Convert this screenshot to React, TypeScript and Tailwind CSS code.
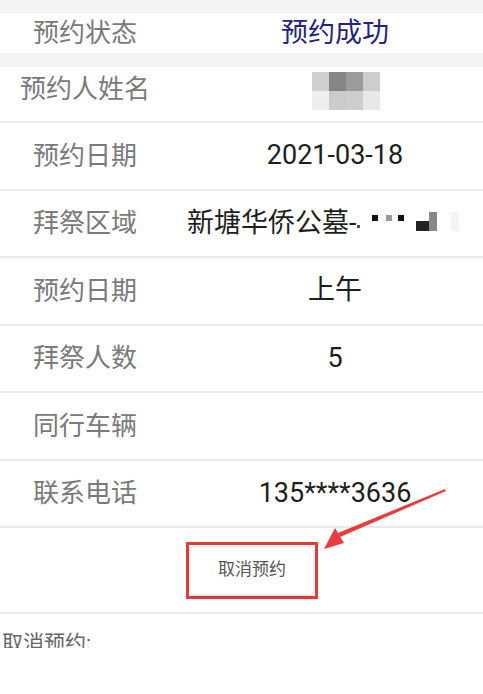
import React from 'react'

const font = { fontFamily: '"Roboto", "Noto Sans CJK SC", sans-serif' }

const rows: { label: string; value: React.ReactNode }[] = [
  { label: '预约日期', value: '2021-03-18' },
  {
    label: '拜祭区域',
    value: (
      <span className="inline-flex items-center">
        新塘华侨公墓-
        <span className="relative inline-block w-[150px] h-[26px]">
          <span className="absolute left-[1px] top-[15px] w-[3px] h-[3px] bg-[#555]" />
          <span className="absolute left-[16px] top-[5px] w-[6px] h-[6px] bg-[#111]" />
          <span className="absolute left-[30px] top-[5px] w-[6px] h-[6px] bg-[#999]" />
          <span className="absolute left-[42px] top-[5px] w-[6px] h-[6px] bg-[#111]" />
          <span className="absolute left-[60px] top-[11px] w-[18px] h-[10px] bg-[#222]" />
          <span className="absolute left-[73px] top-[2px] w-[8px] h-[19px] bg-[#888]" />
          <span className="absolute left-[95px] top-[2px] w-[8px] h-[19px] bg-[#f4f4f4]" />
        </span>
      </span>
    ),
  },
  { label: '预约日期', value: '上午' },
  { label: '拜祭人数', value: '5' },
  { label: '同行车辆', value: '' },
  { label: '联系电话', value: '135****3636' },
]

const App = () => {
  return (
    <div style={font} className="relative w-[483px] h-[694px] bg-white overflow-hidden">
      <div className="h-[13px] bg-[#f3f3f3]" />
      <div className="flex h-[40px] items-center bg-white">
        <div className="w-[170px] text-center text-[26px] text-[#7a7a7a] leading-none">预约状态</div>
        <div className="ml-[17px] w-[296px] text-center text-[27px] text-[#25237f] leading-none">预约成功</div>
      </div>
      <div className="h-[14px] bg-[#f3f3f3]" />
      <div className="flex h-[56px] items-start pt-[9px] border-b-2 border-[#e9e9e9]">
        <div className="w-[170px] text-center text-[26px] text-[#7a7a7a] leading-none">预约人姓名</div>
        <div className="ml-[17px] w-[296px] flex justify-center -mt-[4px]">
          <div className="grid grid-cols-4 w-[68px] h-[38px] ml-[22px]">
            <div className="bg-[#cfcfcf]" />
            <div className="bg-[#858585]" />
            <div className="bg-[#9c9c9c]" />
            <div className="bg-[#cdcdcd]" />
            <div className="bg-[#eeeeee]" />
            <div className="bg-[#cbcbcb]" />
            <div className="bg-[#cdcdcd]" />
            <div className="bg-[#e8e8e8]" />
          </div>
        </div>
      </div>
      {rows.map((r, i) => (
        <div key={i} className="flex h-[67.5px] items-center border-b-2 border-[#e9e9e9] overflow-hidden">
          <div className="w-[170px] shrink-0 text-center text-[26px] text-[#7a7a7a] leading-none">{r.label}</div>
          <div className="ml-[17px] w-[296px] shrink-0 text-center text-[27px] text-[#1e1e1e] leading-none whitespace-nowrap">
            {r.value}
          </div>
        </div>
      ))}
      <div className="flex h-[86px] justify-center items-center pl-[21px] border-b-2 border-[#e9e9e9]">
        <div className="border-[3px] border-[#e53a3a] p-[1px]">
          <button className="w-[124px] h-[49px] bg-white rounded-[3px] border border-[#efefef] shadow-[0_2px_2px_rgba(0,0,0,0.12)] text-[17px] text-[#555]">
            取消预约
          </button>
        </div>
      </div>
      <div className="h-[34px] overflow-hidden pl-[2px]">
        <div className="pt-[19px] text-[21px] text-[#666] leading-none">取消预约:</div>
      </div>

      <svg className="absolute left-0 top-0 pointer-events-none" width="483" height="694">
        <polygon points="445,489 446,491 340,537 338,533" fill="#ea3c3c" />
        <polygon points="324,549 335,528 344,543" fill="#ea3c3c" />
      </svg>
    </div>
  )
}

export default App
